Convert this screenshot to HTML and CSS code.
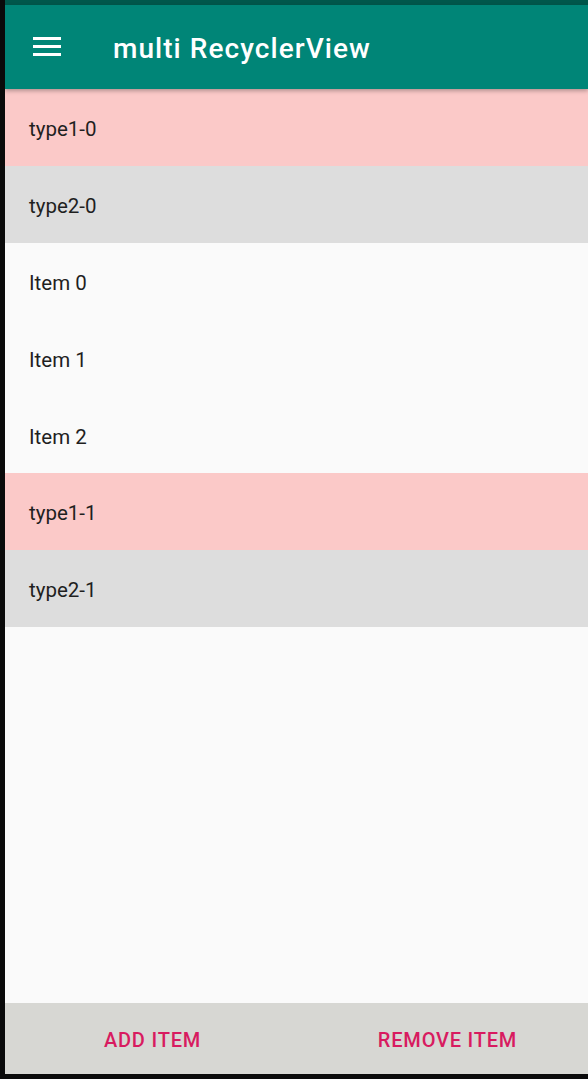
FILE: index.html
```html
<!DOCTYPE html>
<html>
<head>
<meta charset="utf-8">
<link rel="stylesheet" href="styles.css">
</head>
<body>
<div class="screen">
  <div class="statusbar"></div>
  <header class="appbar">
    <svg class="menu" width="28" height="20" viewBox="0 0 28 20">
      <rect x="0" y="0" width="28" height="3" fill="#fff"/>
      <rect x="0" y="8" width="28" height="3" fill="#fff"/>
      <rect x="0" y="16" width="28" height="3" fill="#fff"/>
    </svg>
    <h1 class="title">multi RecyclerView</h1>
  </header>
  <main class="list">
    <div class="row type1">type1-0</div>
    <div class="row type2">type2-0</div>
    <div class="row item">Item 0</div>
    <div class="row item">Item 1</div>
    <div class="row item">Item 2</div>
    <div class="row type1">type1-1</div>
    <div class="row type2">type2-1</div>
  </main>
  <footer class="actions">
    <button class="btn btn-add">ADD ITEM</button>
    <button class="btn btn-remove">REMOVE ITEM</button>
  </footer>
</div>
</body>
</html>
```

FILE: styles.css
```css
html, body {
  margin: 0;
  padding: 0;
  height: 100%;
  background: #0a0a0a;
}
body {
  font-family: Roboto, "Liberation Sans", sans-serif;
}
.screen {
  margin-left: 5px;
  height: 1074px;
  background: #fafafa;
  display: flex;
  flex-direction: column;
  overflow: hidden;
}
.statusbar {
  height: 5px;
  background: #00574b;
  flex: none;
}
.appbar {
  height: 84px;
  flex: none;
  background: #008577;
  display: flex;
  align-items: center;
  box-shadow: 0 2px 4px rgba(0,0,0,0.28);
  position: relative;
  z-index: 1;
}
.menu {
  margin-left: 28px;
  margin-top: -1px;
  flex: none;
}
.title {
  margin: 2px 0 0 52px;
  color: #fff;
  font-size: 28px;
  font-weight: 500;
  letter-spacing: 1.05px;
}
.list {
  flex: 1;
}
.row {
  height: 76.8px;
  display: flex;
  align-items: center;
  padding-left: 24px;
  padding-top: 4px;
  font-size: 20.5px;
  color: #1f1f1f;
  box-sizing: border-box;
}
.type1 { background: #fbc9c8; }
.type2 { background: #dddddd; }
.item { background: #fafafa; }
.actions {
  height: 71px;
  flex: none;
  background: #d7d7d3;
  display: flex;
}
.btn {
  flex: 1;
  border: none;
  background: transparent;
  color: #d81b60;
  font-family: Roboto, "Liberation Sans", sans-serif;
  font-size: 20px;
  font-weight: 500;
  padding: 2px 0 0 7px;
  margin: 0;
  letter-spacing: 0.8px;
}
.btn-remove {
  padding-left: 14px;
}
```
